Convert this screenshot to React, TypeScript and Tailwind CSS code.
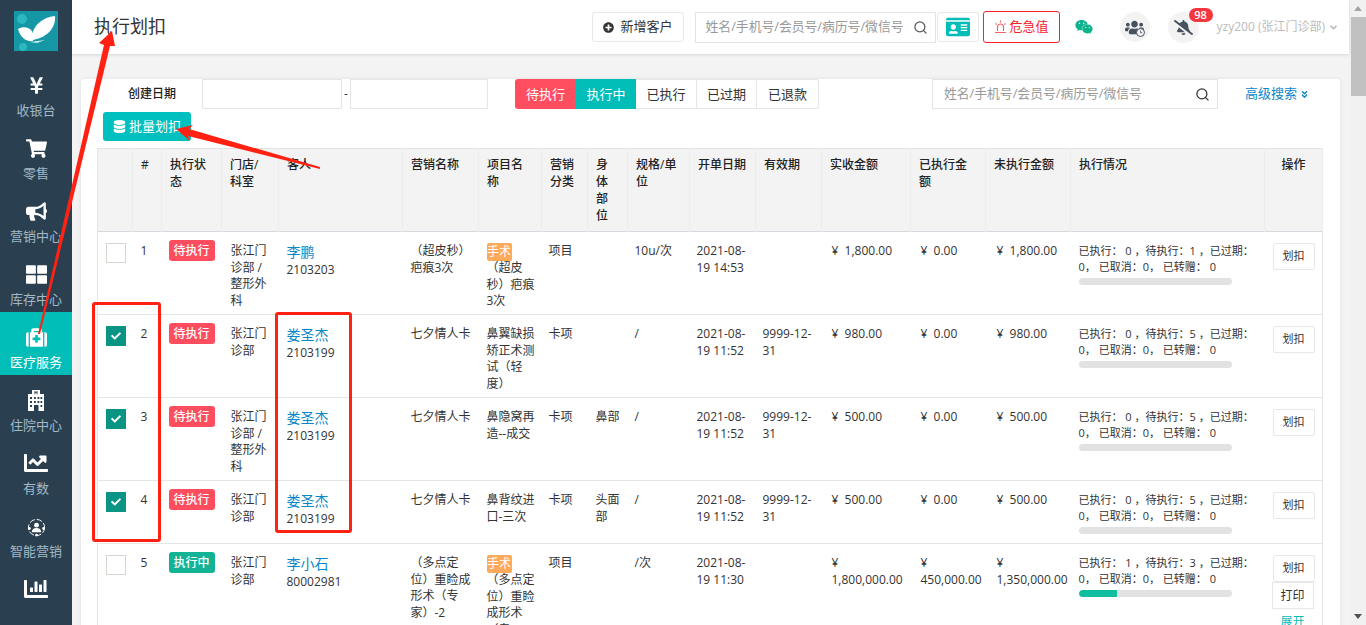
import { ReactNode } from 'react';
import {
  FaYenSign,
  FaShoppingCart,
  FaBullhorn,
  FaThLarge,
  FaMedkit,
  FaChartLine,
  FaChartBar,
  FaDatabase,
  FaPlusCircle,
  FaCheck,
  FaIdCard,
  FaWeixin,
  FaUsers,
  FaBellSlash,
  FaAngleDown,
  FaAngleDoubleDown,
} from 'react-icons/fa';
import { Search } from 'lucide-react';

const FONT = "font-['Open_Sans','Noto_Sans_CJK_SC',sans-serif]";

function SmartIcon() {
  return (
    <svg width="19" height="19" viewBox="0 0 20 20" fill="white" className="mt-[3px]">
      <circle cx="10" cy="7.500" r="2.600" />
      <path d="M5 15c0-3 2-4.600 5-4.600s5 1.600 5 4.600z" />
      <circle cx="10" cy="10" r="8.500" fill="none" stroke="white" strokeWidth="1" strokeDasharray="6 2" />
      <circle cx="2.500" cy="11" r="1.500" />
      <circle cx="17.500" cy="11" r="1.500" />
      <circle cx="10" cy="18" r="1.500" />
    </svg>
  );
}

function HospitalIcon() {
  return (
    <svg width="18" height="21" viewBox="0 0 18 21" className="mt-[1px]">
      <path fill="white" d="M5 0h8v4h4v17H1V4h4z" />
      <path fill="#2a4050" d="M7.500 1h.9v1.200h1.200V1h.9v3.200h-.9V3H8.400v1.200h-.9zM3 7h2v2H3zm4 0h1.800v2H7zm3.500 0h1.800v2h-1.800zM13.500 7h1.700v2h-1.700zM3 11h2v2H3zm4 0h1.800v2H7zm3.500 0h1.800v2h-1.800zM13.500 11h1.700v2h-1.700zM3 15h2v2H3zm4 0h4.500v6H7zM13.500 15h1.700v2h-1.700z" />
    </svg>
  );
}

const navItems: { label: string; icon: ReactNode; active?: boolean }[] = [
  { label: '收银台', icon: <FaYenSign size={19} /> },
  { label: '零售', icon: <FaShoppingCart size={21} /> },
  { label: '营销中心', icon: <FaBullhorn size={21} /> },
  { label: '库存中心', icon: <FaThLarge size={21} /> },
  { label: '医疗服务', icon: <FaMedkit size={21} />, active: true },
  { label: '住院中心', icon: <HospitalIcon /> },
  { label: '有数', icon: <FaChartLine size={24} /> },
  { label: '智能营销', icon: <SmartIcon /> },
  { label: '', icon: <FaChartBar size={24} /> },
];

function Sidebar() {
  return (
    <aside className="w-[72px] shrink-0 bg-[#2a4050] h-full overflow-hidden">
      <div className="h-[60px] pt-[11px] pl-[14px]">
        <svg width="44" height="40" viewBox="0 0 44 40">
          <rect width="44" height="40" fill="#1597a5" />
          <circle cx="8" cy="8" r="5" fill="#2bb9c0" />
          <circle cx="9" cy="36" r="4" fill="#2bb9c0" />
          <path d="M17 27C19 14 29 6 41 5c1 10-6 21-22 24z" fill="#fff" />
          <path d="M4 18c5-3 11-2 14 2l1 10c-7 1-13-4-15-12z" fill="#fff" />
          <path d="M16 31l15-2-8 3z" fill="#cfeef0" />
        </svg>
      </div>
      {navItems.map((item) => (
        <div
          key={item.label || 'chart'}
          className={`h-[63px] flex flex-col items-center pt-[13px] ${item.active ? 'bg-[#00bdb8] text-white' : 'text-[#a3b8c6]'}`}
        >
          <div className="h-[24px] flex items-center text-white">{item.icon}</div>
          <div className="text-[13px] leading-[18px] mt-[4px] whitespace-nowrap">{item.label}</div>
        </div>
      ))}
    </aside>
  );
}

function Header() {
  return (
    <header className="h-[54px] shrink-0 bg-white flex items-center shadow-[0_1px_3px_rgba(0,0,0,0.12)] relative pl-[22px]">
      <h1 className="text-[18px] leading-[24px] text-[#333] -mt-[3px]">执行划扣</h1>
      <div className="ml-auto flex items-center pr-[10px]">
        <button className="w-[92px] h-[30px] border border-[#e6e8ea] rounded-[3px] flex items-center justify-center gap-[7px] text-[13px] text-[#333]">
          <FaPlusCircle size={11} />
          新增客户
        </button>
        <div className="ml-[11px] w-[241px] h-[31px] border border-[#e2e5e8] flex items-center pl-[10px] pr-[7px] text-[12.8px] text-[#999]">
          <span className="whitespace-nowrap">姓名/手机号/会员号/病历号/微信号</span>
          <Search size={15} className="ml-auto text-[#555]" />
        </div>
        <div className="ml-px w-[42px] h-[30px] border border-[#e6e8ea] rounded-[3px] flex items-center justify-center text-[#00bdb8]">
          <FaIdCard size={24} />
        </div>
        <button className="ml-[4px] w-[77px] h-[32px] border border-[#f5222d] rounded-[3px] flex items-center justify-center gap-[3px] text-[13px] text-[#f5222d]">
          <svg width="13" height="14" viewBox="0 0 13 14" fill="none" stroke="#f5606a" strokeWidth="1.200">
            <path d="M3.500 11V7a3 3 0 0 1 6 0v4M1 12.500h11M6.500 .5V2.500M1.500 3.500l1 1M11.500 3.500l-1 1" />
          </svg>
          危急值
        </button>
        <FaWeixin size={18} className="ml-[15px] text-[#0bb38c]" />
        <div className="ml-[27px] w-[30px] h-[30px] rounded-full bg-[#f3f3f3] flex items-center justify-center text-[#47515f] relative">
          <FaUsers size={19} />
          <svg width="9" height="9" viewBox="0 0 9 9" className="absolute right-[5px] bottom-[5px]">
            <circle cx="4.500" cy="4.500" r="4" fill="#f3f3f3" stroke="#47515f" strokeWidth="1" />
            <path d="M4.500 2.500v2.200h1.800" fill="none" stroke="#47515f" strokeWidth="0.8" />
          </svg>
        </div>
        <div className="ml-[18px] w-[31px] h-[31px] rounded-full bg-[#f3f3f3] flex items-center justify-center text-[#47515f] relative">
          <FaBellSlash size={19} />
          <span className="absolute left-[21px] -top-[4px] w-[24px] h-[14px] rounded-full bg-[#f5363f] text-white text-[11px] leading-[14px] text-center font-semibold">98</span>
        </div>
        <div className="ml-[18px] flex items-center gap-[3px] text-[12px] text-[#bbb] whitespace-nowrap">
          yzy200 (张江门诊部)
          <FaAngleDown size={11} />
        </div>
      </div>
    </header>
  );
}

function Filters() {
  return (
    <div className="flex items-center h-[30px] mt-[16px] ml-[47px] mr-[31px]">
      <span className="text-[12px] font-medium text-[#222] w-[74px]">创建日期</span>
      <div className="w-[140px] h-[30px] border border-[#e6e6e6]" />
      <span className="w-[8px] text-center text-[12px] text-[#333]">-</span>
      <div className="w-[138px] h-[30px] border border-[#e6e6e6]" />
      <div className="ml-[27px] flex text-[13px] h-[30px] leading-[30px] text-center">
        <div className="w-[61px] bg-[#ff4d60] text-white rounded-l-[3px]">待执行</div>
        <div className="w-[60px] bg-[#00bdb8] text-white">执行中</div>
        <div className="w-[61px] border border-l-0 border-[#e6e6e6] text-[#333] leading-[28px]">已执行</div>
        <div className="w-[60px] border border-l-0 border-[#e6e6e6] text-[#333] leading-[28px]">已过期</div>
        <div className="w-[62px] border border-l-0 border-[#e6e6e6] rounded-r-[3px] text-[#333] leading-[28px]">已退款</div>
      </div>
      <div className="ml-auto w-[286px] h-[30px] border border-[#e2e5e8] flex items-center pl-[11px] pr-[7px] text-[12.8px] text-[#999]">
        <span className="whitespace-nowrap">姓名/手机号/会员号/病历号/微信号</span>
        <Search size={15} className="ml-auto text-[#333]" />
      </div>
      <div className="ml-[27px] flex items-center gap-[3px] text-[13px] text-[#0a87c8] whitespace-nowrap">
        高级搜索
        <FaAngleDoubleDown size={9} />
      </div>
    </div>
  );
}

const colWidths = ['w-[35px]', 'w-[29px]', 'w-[60px]', 'w-[57px]', 'w-[124px]', 'w-[76px]', 'w-[63px]', 'w-[46px]', 'w-[40px]', 'w-[62px]', 'w-[66px]', 'w-[66px]', 'w-[89px]', 'w-[75px]', 'w-[85px]', 'w-[194px]', 'w-[58px]'];

const headers = ['', '#', '执行状\n态', '门店/\n科室', '客人', '营销名称', '项目名\n称', '营销\n分类', '身\n体\n部\n位', '规格/单\n位', '开单日期', '有效期', '实收金额', '已执行金\n额', '未执行金额', '执行情况', '操作'];

type Row = {
  id: number;
  height: string;
  checked: boolean;
  running?: boolean;
  store: string;
  name: string;
  code: string;
  promo: string;
  tag?: boolean;
  project: string;
  kind: string;
  part: string;
  spec: string;
  date: string;
  expire: string;
  paid: string;
  done: string;
  left: string;
  execLine1: string;
  progress?: number;
};

const rows: Row[] = [
  { id: 1, height: 'h-[83px]', checked: false, store: '张江门\n诊部 /\n整形外\n科', name: '李鹏', code: '2103203', promo: '（超皮秒）\n疤痕3次', tag: true, project: '（超皮\n秒）疤痕\n3次', kind: '项目', part: '', spec: '10u/次', date: '2021-08-\n19 14:53', expire: '', paid: '¥  1,800.00', done: '¥  0.00', left: '¥  1,800.00', execLine1: '已执行： 0 ，待执行：1 ，已过期：' },
  { id: 2, height: 'h-[83px]', checked: true, store: '张江门\n诊部', name: '娄圣杰', code: '2103199', promo: '七夕情人卡', project: '鼻翼缺损\n矫正术测\n试（轻\n度）', kind: '卡项', part: '', spec: '/', date: '2021-08-\n19 11:52', expire: '9999-12-\n31', paid: '¥  980.00', done: '¥  0.00', left: '¥  980.00', execLine1: '已执行： 0 ，待执行：5 ，已过期：' },
  { id: 3, height: 'h-[83px]', checked: true, store: '张江门\n诊部 /\n整形外\n科', name: '娄圣杰', code: '2103199', promo: '七夕情人卡', project: '鼻隐窝再\n造--成交', kind: '卡项', part: '鼻部', spec: '/', date: '2021-08-\n19 11:52', expire: '9999-12-\n31', paid: '¥  500.00', done: '¥  0.00', left: '¥  500.00', execLine1: '已执行： 0 ，待执行：5 ，已过期：' },
  { id: 4, height: 'h-[63px]', checked: true, store: '张江门\n诊部', name: '娄圣杰', code: '2103199', promo: '七夕情人卡', project: '鼻背纹进\n口-三次', kind: '卡项', part: '头面\n部', spec: '/', date: '2021-08-\n19 11:52', expire: '9999-12-\n31', paid: '¥  500.00', done: '¥  0.00', left: '¥  500.00', execLine1: '已执行： 0 ，待执行：5 ，已过期：' },
  { id: 5, height: 'h-[100px]', checked: false, running: true, store: '张江门\n诊部', name: '李小石', code: '80002981', promo: '（多点定\n位）重睑成\n形术（专\n家）-2', tag: true, project: '（多点定\n位）重睑\n成形术\n（专', kind: '项目', part: '', spec: '/次', date: '2021-08-\n19 11:30', expire: '', paid: '¥\n1,800,000.00', done: '¥\n450,000.00', left: '¥\n1,350,000.00', execLine1: '已执行： 1 ，待执行：3 ，已过期：', progress: 25 },
];

const cell = 'align-top px-[8px] pt-[11px] text-[12px] leading-[16.500px] text-[#333] whitespace-pre';

function TableRow({ row }: { row: Row }) {
  return (
    <tr className={`${row.height} border-b border-[#e6e6e6]`}>
      <td className="align-top pl-[8px] pt-[11px]">
        {row.checked ? (
          <div className="w-[20px] h-[20px] bg-[#0a9483] flex items-center justify-center text-white">
            <FaCheck size={10} />
          </div>
        ) : (
          <div className="w-[20px] h-[20px] border border-[#d8d5ce]" />
        )}
      </td>
      <td className={cell}>{row.id}</td>
      <td className="align-top pl-[7px] pt-[8px]">
        <span className={`block w-[46px] h-[21px] rounded-[3px] text-white text-[12px] leading-[21px] text-center font-medium ${row.running ? 'bg-[#12b495]' : 'bg-[#ff4d60]'}`}>
          {row.running ? '执行中' : '待执行'}
        </span>
      </td>
      <td className={`${cell} pl-[9px]`}>{row.store}</td>
      <td className="align-top px-[8px] pt-[10px] whitespace-nowrap">
        <div className="text-[14px] leading-[19px] text-[#0a87c8]">{row.name}</div>
        <div className="text-[12px] leading-[17px] text-[#333]">{row.code}</div>
      </td>
      <td className={cell}>{row.promo}</td>
      <td className={`${cell} pt-[10px]`}>
        {row.tag && <span className="block w-[25px] h-[18px] mb-[-1px] rounded-[2px] bg-[#ffa95a] text-white text-[12px] leading-[18px] text-center">手术</span>}
        {row.project}
      </td>
      <td className={`${cell} pl-[7px]`}>{row.kind}</td>
      <td className={cell}>{row.part}</td>
      <td className={`${cell} pl-[7px]`}>{row.spec}</td>
      <td className={`${cell} pl-[7px]`}>{row.date}</td>
      <td className={`${cell} pl-[7px]`}>{row.expire}</td>
      <td className={`${cell} pl-[10px] text-[11px]`}>{row.paid}</td>
      <td className={`${cell} pl-[10px]`}>{row.done}</td>
      <td className={`${cell} pl-[11px]`}>{row.left}</td>
      <td className="align-top pl-[8px] pt-[11px]">
        <div className="text-[11px] leading-[16px] text-[#333] whitespace-pre">
          {row.execLine1}
          {'\n0， 已取消：0， 已转赠： 0'}
        </div>
        <div className="w-[153px] h-[7px] mt-[3px] rounded-full bg-[#e2e2e2] overflow-hidden">
          {row.progress ? <div className="h-full bg-[#10bd9f] rounded-l-full" style={{ width: `${row.progress}%` }} /> : null}
        </div>
      </td>
      <td className="align-top pl-[8px] pt-[11px]">
        <button className="block w-[42px] h-[27px] border border-[#e6e8ea] rounded-[2px] text-[11px] text-[#333]">划扣</button>
        {row.running && (
          <>
            <button className="block -ml-px w-[42px] h-[27px] border border-[#e6e8ea] text-[12px] text-[#333]">打印</button>
            <div className="mt-[5px] ml-[8px] text-[12px] leading-[16px] text-[#00bdb8] whitespace-nowrap">展开</div>
          </>
        )}
      </td>
    </tr>
  );
}

function RecordTable() {
  return (
    <table className="mt-[7px] ml-[16px] w-[1225px] table-fixed border-collapse border-x border-[#e6e6e6]">
      <colgroup>
        {colWidths.map((w, i) => (
          <col key={i} className={w} />
        ))}
      </colgroup>
      <thead>
        <tr className="h-[83px] bg-[#f3f3f3] border-t border-t-[#e2e2e2] border-b border-b-[#d3d9de]">
          {headers.map((h, i) => (
            <th
              key={i}
              className={`align-top px-[8px] pt-[7px] text-[12px] leading-[17px] font-medium text-[#222] whitespace-pre border-r border-[#ececec] ${i === 16 ? 'text-center' : 'text-left'}`}
            >
              {h}
            </th>
          ))}
        </tr>
      </thead>
      <tbody>
        {rows.map((row) => (
          <TableRow key={row.id} row={row} />
        ))}
      </tbody>
    </table>
  );
}

// annotations someone drew on top of the screenshot
function Annotations() {
  return (
    <div className="absolute inset-0 pointer-events-none">
      <svg width="1366" height="625" className="block">
        <polygon points="38,334 104,45 99,43 112,31 115,46 110,46 40,334" fill="#ff2213" />
        <polygon points="320,169 188,136 190,141 176,129 193,125 189,129 320,167" fill="#ff2213" />
      </svg>
      <div className="absolute left-[92px] top-[302px] w-[69px] h-[240px] border-[3px] border-[#ff2213] rounded-[3px]" />
      <div className="absolute left-[275px] top-[312px] w-[77px] h-[221px] border-[3px] border-[#ff2213] rounded-[3px]" />
    </div>
  );
}

function Scrollbar() {
  return (
    <div className="w-[17px] shrink-0 bg-[#f1f1f1] flex flex-col items-end h-full">
      <div className="h-[17px] w-full flex items-center justify-center">
        <div className="w-0 h-0 border-x-[4px] border-x-transparent border-b-[5px] border-b-[#a3a3a3]" />
      </div>
      <div className="w-[15px] h-[79px] bg-[#c1c1c1]" />
      <div className="mt-auto h-[17px] w-full flex items-center justify-center">
        <div className="w-0 h-0 border-x-[4px] border-x-transparent border-t-[5px] border-t-[#505050]" />
      </div>
    </div>
  );
}

export default function App() {
  return (
    <div className={`${FONT} relative flex w-[1366px] h-[625px] overflow-hidden bg-[#f3f3f3]`}>
      <Sidebar />
      <main className="flex-1 min-w-0 flex flex-col h-full">
        <Header />
        <div className="flex-1 min-h-0 pt-[9px] pl-[9px] pr-[9px] overflow-hidden">
          <section className="bg-white rounded-t-[3px] h-[600px] shadow-[0_0_4px_rgba(0,0,0,0.08)]">
            <Filters />
            <button className="mt-[3px] ml-[22px] w-[88px] h-[29px] flex items-center justify-center gap-[3px] rounded-[3px] bg-[#00bfbf] text-white text-[13px]">
              <FaDatabase size={13} />
              批量划扣
            </button>
            <RecordTable />
          </section>
        </div>
      </main>
      <Scrollbar />
      <Annotations />
    </div>
  );
}
